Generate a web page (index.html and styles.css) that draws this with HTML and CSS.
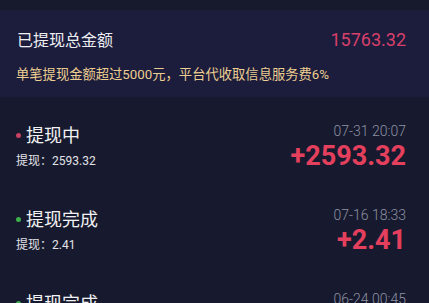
FILE: index.html
```html
<!DOCTYPE html>
<html lang="zh">
<head>
<meta charset="utf-8">
<link rel="stylesheet" href="styles.css">
</head>
<body>
<div class="topbar"></div>
<section class="summary">
  <div class="summary-row">
    <span class="summary-label">已提现总金额</span>
    <span class="summary-amount">15763.32</span>
  </div>
  <p class="notice">单笔提现金额超过5000元，平台代收取信息服务费6%</p>
</section>
<ul class="records">
  <li class="record">
    <div class="rec-left">
      <div class="rec-title"><span class="dot dot-pending"></span>提现中</div>
      <div class="rec-sub">提现：2593.32</div>
    </div>
    <div class="rec-right">
      <div class="rec-date">07-31 20:07</div>
      <div class="rec-amount">+2593.32</div>
    </div>
  </li>
  <li class="record">
    <div class="rec-left">
      <div class="rec-title"><span class="dot dot-done"></span>提现完成</div>
      <div class="rec-sub">提现：2.41</div>
    </div>
    <div class="rec-right">
      <div class="rec-date">07-16 18:33</div>
      <div class="rec-amount">+2.41</div>
    </div>
  </li>
  <li class="record">
    <div class="rec-left">
      <div class="rec-title"><span class="dot dot-done"></span>提现完成</div>
      <div class="rec-sub">提现：0.00</div>
    </div>
    <div class="rec-right">
      <div class="rec-date">06-24 00:45</div>
      <div class="rec-amount">+0.00</div>
    </div>
  </li>
</ul>
</body>
</html>
```

FILE: styles.css
```css
* { box-sizing: border-box; }
html, body {
  margin: 0;
  padding: 0;
  background: #171a2e;
  font-family: Roboto, "Noto Sans CJK SC", sans-serif;
  color: #f0f0f4;
  overflow: hidden;
}
.topbar {
  height: 10px;
  background: #161a2c;
}
.summary {
  background: #1c1d3d;
  padding: 17px 23px 13px 17px;
}
.summary-row {
  display: flex;
  justify-content: space-between;
  align-items: center;
  height: 24px;
}
.summary-label {
  font-size: 16px;
  color: #eeeef2;
}
.summary-amount {
  font-size: 18px;
  color: #d8406a;
}
.notice {
  margin: 15px 0 0 -1px;
  font-size: 13.3px;
  line-height: 18px;
  color: #ecce90;
}
.records {
  list-style: none;
  margin: 0;
  padding: 0;
}
.record {
  height: 84px;
  padding: 25px 23px 0 16px;
  display: flex;
  justify-content: space-between;
  align-items: flex-start;
}
.rec-left {
  padding-top: 2px;
}
.rec-title {
  display: flex;
  align-items: center;
  font-size: 18px;
  line-height: 24px;
  color: #f2f2f4;
}
.dot {
  width: 5px;
  height: 5px;
  border-radius: 50%;
  margin-right: 5px;
  margin-top: -2px;
}
.dot-pending { background: #c84062; }
.dot-done { background: #3cb04a; }
.rec-sub {
  margin-top: 5px;
  font-size: 12px;
  line-height: 16px;
  color: #e2e2e8;
}
.rec-right {
  display: flex;
  flex-direction: column;
  align-items: flex-end;
}
.rec-date {
  font-size: 14px;
  line-height: 18px;
  font-weight: 300;
  color: #8e92a4;
}
.rec-amount {
  font-size: 27px;
  line-height: 32px;
  font-weight: 700;
  color: #e4405e;
}
```
